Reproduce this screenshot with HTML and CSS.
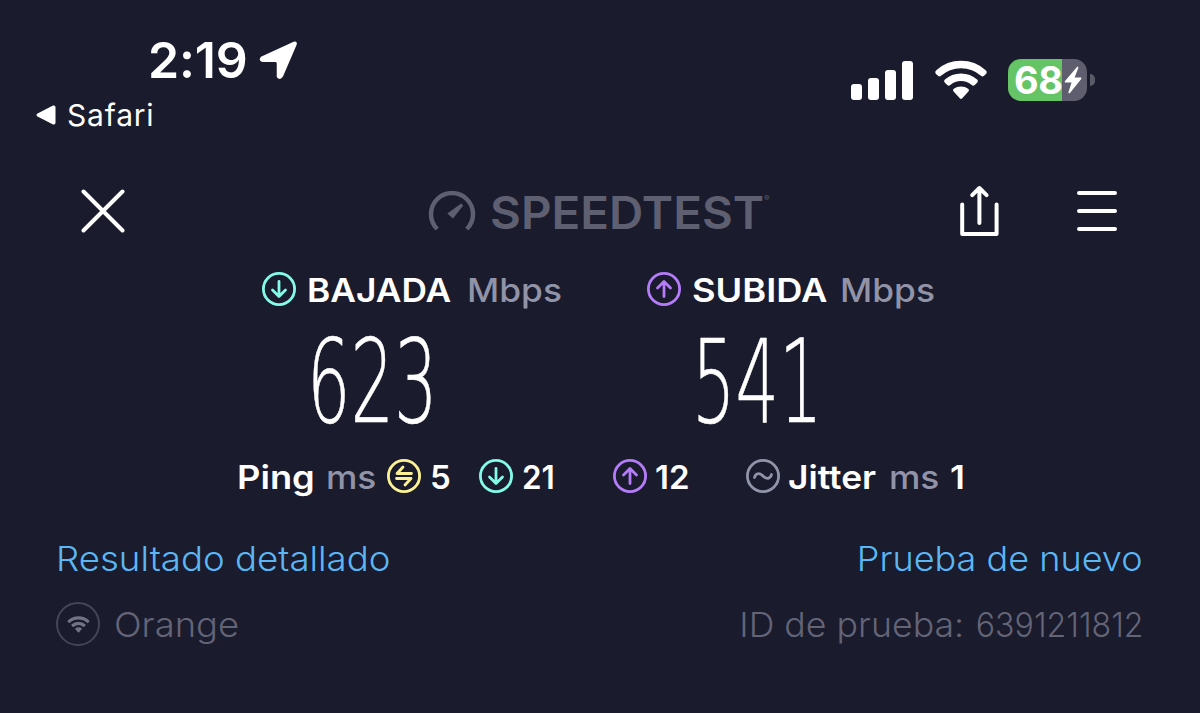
FILE: index.html
```
<!DOCTYPE html>
<html lang="es">

<head>
  <meta charset="UTF-8">
  <meta name="viewport" content="width=device-width, initial-scale=1.0">
  <title>Speedtest</title>
  <link rel="stylesheet" href="styles.css">
</head>

<body>
  <!-- shared icons -->
  <svg width="0" height="0" class="defs">
    <symbol id="down" viewBox="0 0 34 34">
      <circle cx="17" cy="17" r="15.6" />
      <path d="M17 9.5V24M10.5 18L17 24.5L23.5 18" />
    </symbol>
    <symbol id="up" viewBox="0 0 34 34">
      <circle cx="17" cy="17" r="15.6" />
      <path d="M17 24.5V10M10.5 16L17 9.5L23.5 16" />
    </symbol>
    <symbol id="wifi" viewBox="0 0 54 40">
      <path d="M2.3 14.2Q0.2 12 2.3 10.2Q12.800 0.800 27 0.800Q41.200 0.800 51.700 10.200Q53.800 12 51.700 14.200L50 15.800Q48.500 17.100 47 15.800Q38.600 8.300 27 8.300Q15.400 8.300 7 15.800Q5.500 17.100 4 15.800Z" />
      <path d="M10.700 22.600Q9.200 21 10.900 19.500Q17.600 13.500 27 13.500Q36.400 13.500 43.100 19.500Q44.800 21 43.300 22.600L40.800 25.100Q39.300 26.500 37.700 25.100Q33.200 21 27 21Q20.800 21 16.300 25.100Q14.700 26.500 13.200 25.100Z" />
      <path d="M19.600 31.400Q18.200 30 19.800 28.800Q22.800 26.500 27 26.500Q31.200 26.500 34.200 28.800Q35.800 30 34.400 31.400L28.200 38.300Q27 39.500 25.800 38.300Z" />
    </symbol>
  </svg>

  <div class="app">
    <header class="status">
      <div class="status-left">
        <div class="clock">
          <span class="time">2:19</span>
          <svg class="location" viewBox="0 0 40 40">
            <path d="M35.500 .8Q39.800 -.4 38.500 4L24.600 36.500Q21.500 41 18.200 37V23Q18.200 21.600 16.800 21.600H3.500Q-1.200 20 2 16.200Z" />
          </svg>
        </div>
        <div class="back">
          <svg class="back-arrow" viewBox="0 0 20 20"><path d="M17 .6Q19.500 -.2 19.500 2.500V17.500Q19.500 20.200 17 19.400L1.500 11.500Q-.5 10 1.500 8.500Z" /></svg>
          <span class="back-text">Safari</span>
        </div>
      </div>
      <div class="status-right">
        <div class="signal"><i></i><i></i><i></i><i></i></div>
        <svg class="wifi"><use href="#wifi" /></svg>
        <div class="battery">
          <span class="level">68</span>
          <svg class="bolt" viewBox="0 0 18 28"><path d="M13.200 .8L.8 15.200Q.2 16.400 1.500 16.400H7.600L4.400 26.300Q4.400 28 6 27L17.200 12.900Q17.800 11.600 16.600 11.600H10.600L14.400 1.800Q14.500 .2 13.200 .8Z" /></svg>
        </div>
      </div>
    </header>

    <nav class="nav">
      <svg class="close line" viewBox="0 0 44 44"><path d="M2.500 2.500L41.500 41.500M41.500 2.500L2.500 41.500" /></svg>
      <div class="logo">
        <svg class="gauge" viewBox="0 0 48 42">
          <path class="arc" d="M9.200 38A21 21 0 1 1 38.800 38" />
          <path class="needle" d="M33.200 12.500L35.200 14.500L25 27.500L19.300 22.500Z" />
        </svg>
        <span class="logo-text">SPEEDTEST</span><span class="reg">®</span>
      </div>
      <svg class="share line" viewBox="0 0 40 52"><path d="M2.200 19.500V49H36.600V19.500M19.400 38V3M12.200 10.200L19.400 3L26.600 10.200" /></svg>
      <svg class="menu line" viewBox="0 0 42 42"><path d="M3 3H39M3 21H39M3 39H39" /></svg>
    </nav>

    <main>
      <section class="speeds">
        <div class="speed">
          <div class="label">
            <svg class="icon down"><use href="#down" /></svg>
            <b class="bajada">BAJADA</b>
            <span class="unit">Mbps</span>
          </div>
          <div class="value">623</div>
        </div>
        <div class="speed">
          <div class="label">
            <svg class="icon up"><use href="#up" /></svg>
            <b class="subida">SUBIDA</b>
            <span class="unit">Mbps</span>
          </div>
          <div class="value">541</div>
        </div>
      </section>

      <section class="latency">
        <b class="ping">Ping</b>
        <span class="ms">ms</span>
        <svg class="icon idle" viewBox="0 0 34 34">
          <circle cx="17" cy="17" r="15.6" />
          <path d="M24.500 14.500H10L16 8M9.500 19.500H24L18 26" />
        </svg>
        <b class="n-idle">5</b>
        <svg class="icon down"><use href="#down" /></svg>
        <b class="n-down">21</b>
        <svg class="icon up"><use href="#up" /></svg>
        <b class="n-up">12</b>
        <svg class="icon jit" viewBox="0 0 34 34">
          <circle cx="17" cy="17" r="15.6" />
          <path d="M8.500 18.500C9.500 14.500 13.500 13 17 17C20.500 20.500 24.500 20 25.500 15.500" />
        </svg>
        <b class="jitter">Jitter</b>
        <span class="ms">ms</span>
        <b>1</b>
      </section>

      <section class="links">
        <a class="detail">Resultado detallado</a>
        <a class="again">Prueba de nuevo</a>
      </section>

      <footer class="info">
        <span class="carrier-icon"><svg><use href="#wifi" /></svg></span>
        <span class="carrier">Orange</span>
        <span class="id-label">ID de prueba:</span>
        <span class="id-number">6391211812</span>
      </footer>
    </main>
  </div>
</body>

</html>
```
FILE: styles.css
```
body {
  margin: 0;
  background: #1a1b2c;
  color: #fff;
  font-family: Inter, "Open Sans", sans-serif;
}

.defs {
  position: absolute;
}

.app {
  width: 1200px;
  height: 713px;
  overflow: hidden;
  white-space: nowrap;
}

svg {
  display: block;
  flex-shrink: 0;
  fill: currentColor;
}

/* status bar */
.status {
  display: flex;
  justify-content: space-between;
  height: 140px;
  padding: 0 105px 0 36px;
}

.status-left {
  padding-top: 35px;
}

.clock {
  display: flex;
  align-items: center;
  height: 50px;
  padding-left: 112px;
}

.time {
  width: 111px;
  font-size: 50px;
  font-weight: 600;
  letter-spacing: -.2px;
}

.location {
  width: 39px;
  height: 39px;
}

.back {
  display: flex;
  align-items: center;
  height: 34px;
  margin-top: 13px;
}

.back-arrow {
  width: 20px;
  height: 20px;
  margin-right: 11px;
}

.back-text {
  font-size: 30px;
  letter-spacing: .8px;
}

.status-right {
  display: flex;
  height: 42px;
  margin-top: 59px;
  align-items: center;
}

.signal {
  display: flex;
  align-items: flex-end;
  gap: 6px;
  margin-right: 21px;
}

.signal i {
  width: 11px;
  height: 16px;
  border-radius: 3px;
  background: #fff;
}

.signal i:nth-child(2) {
  height: 22px;
}

.signal i:nth-child(3) {
  height: 30px;
}

.signal i:nth-child(4) {
  height: 39px;
}

.wifi {
  width: 54px;
  height: 40px;
  margin-right: 20px;
}

.battery {
  position: relative;
  display: flex;
  align-items: center;
  width: 79px;
  height: 42px;
  margin-right: 8px;
  border-radius: 13px;
  background: linear-gradient(90deg, #65c466 54px, #5f5e6e 54px);
}

.battery::after {
  content: "";
  position: absolute;
  left: 82px;
  top: 15px;
  width: 5px;
  height: 12px;
  border-radius: 0 5px 5px 0;
  background: #5b5b68;
}

.level {
  width: 49px;
  padding-left: 6px;
  font-size: 38px;
  font-weight: 700;
  letter-spacing: -.5px;
}

.bolt {
  width: 18px;
  height: 28px;
  margin-left: 1px;
}

/* toolbar */
.nav {
  display: flex;
  align-items: center;
  height: 84px;
  margin-top: 29px;
  padding: 0 82px 0 81px;
}

.line {
  fill: none;
  stroke: currentColor;
  stroke-width: 4;
  stroke-linecap: round;
  stroke-linejoin: round;
}

.close {
  width: 44px;
  height: 44px;
}

.logo {
  display: flex;
  align-items: center;
  width: 531px;
  margin: 2px 0 0 303px;
  color: #5f5f72;
}

.gauge {
  width: 48px;
  height: 42px;
  margin-right: 14px;
}

.arc {
  fill: none;
  stroke: currentColor;
  stroke-width: 4.500;
}

.logo-text {
  width: 274px;
  font-size: 45px;
  font-weight: 600;
  transform: scaleX(1.055);
  transform-origin: left;
}

.reg {
  margin-top: -28px;
  font-size: 8px;
}

.share {
  width: 40px;
  height: 52px;
  margin-left: 1px;
}

.menu {
  width: 42px;
  height: 42px;
  margin-left: 76px;
}

/* results */
.speeds {
  display: grid;
  grid-template-columns: 385px 385px;
  padding: 19px 0 0 262px;
}

.label {
  display: flex;
  align-items: center;
  height: 34px;
  font-size: 33px;
}

/* the labels are set a little wider than the font */
.label b,
.label span,
.latency b,
.latency span {
  padding-top: 1px;
  transform: scaleX(1.07);
  transform-origin: left;
}

b {
  font-weight: 600;
}

.icon {
  width: 34px;
  height: 34px;
  fill: none;
  stroke: currentColor;
  stroke-width: 2.800;
  stroke-linecap: round;
  stroke-linejoin: round;
}

.down {
  color: #83fbe8;
}

.up {
  color: #b47cf8;
}

.idle {
  color: #fcf294;
}

.jit {
  color: #9193a8;
}

.bajada {
  width: 148px;
  margin-left: 11px;
}

.label .subida {
  width: 136px;
  margin-left: 11px;
  transform: scaleX(1.1);
}

.unit,
.ms {
  color: #9193a8;
  font-weight: 500;
}

.unit {
  margin-left: 12px;
}

.value {
  height: 122px;
  margin: 15px 0 0 45px;
  font: 200 116px/122px "DejaVu Sans Light", "DejaVu Sans", sans-serif;
  transform: scaleX(.59);
  transform-origin: left;
  -webkit-text-stroke: .6px #fff;
}

.latency {
  display: flex;
  align-items: center;
  height: 34px;
  padding-left: 237px;
  margin-top: 16px;
  font-size: 33px;
}

.latency .ping {
  width: 89px;
  transform: scaleX(1.1);
}

.ms {
  width: 61px;
}

.latency .n-idle {
  width: 49px;
  margin-left: 9px;
  transform: none;
}

.latency .down {
  margin-right: 9px;
}

.latency .n-down {
  width: 91px;
  transform: scaleX(.95);
}

.latency .up {
  margin-right: 8px;
}

.latency .n-up {
  width: 91px;
  transform: none;
}

.jitter {
  width: 101px;
  margin-left: 8px;
}

.links {
  display: flex;
  justify-content: space-between;
  align-items: center;
  height: 44px;
  margin: 43px 57px 0 56px;
  color: #5ab7f4;
  font-size: 34px;
  font-weight: 300;
}

.detail {
  transform: scaleX(1.077);
  transform-origin: left;
}

.again {
  transform: scaleX(1.06);
  transform-origin: right;
}

.info {
  display: flex;
  align-items: center;
  height: 46px;
  margin: 21px 56px 0;
  color: #646477;
  font-size: 34px;
  font-weight: 300;
}

.carrier-icon {
  display: flex;
  align-items: center;
  justify-content: center;
  box-sizing: border-box;
  width: 44px;
  height: 44px;
  margin-right: 14px;
  border: 2px solid #454557;
  border-radius: 50%;
  color: #737385;
}

.carrier-icon svg {
  width: 23px;
  height: 17px;
}

.carrier {
  transform: scaleX(1.07);
  transform-origin: left;
}

.id-label {
  margin-left: auto;
  transform: scaleX(1.05);
  transform-origin: right;
}

.id-number {
  margin-left: 2px;
  transform: scaleX(.945);
  transform-origin: right;
}
```
